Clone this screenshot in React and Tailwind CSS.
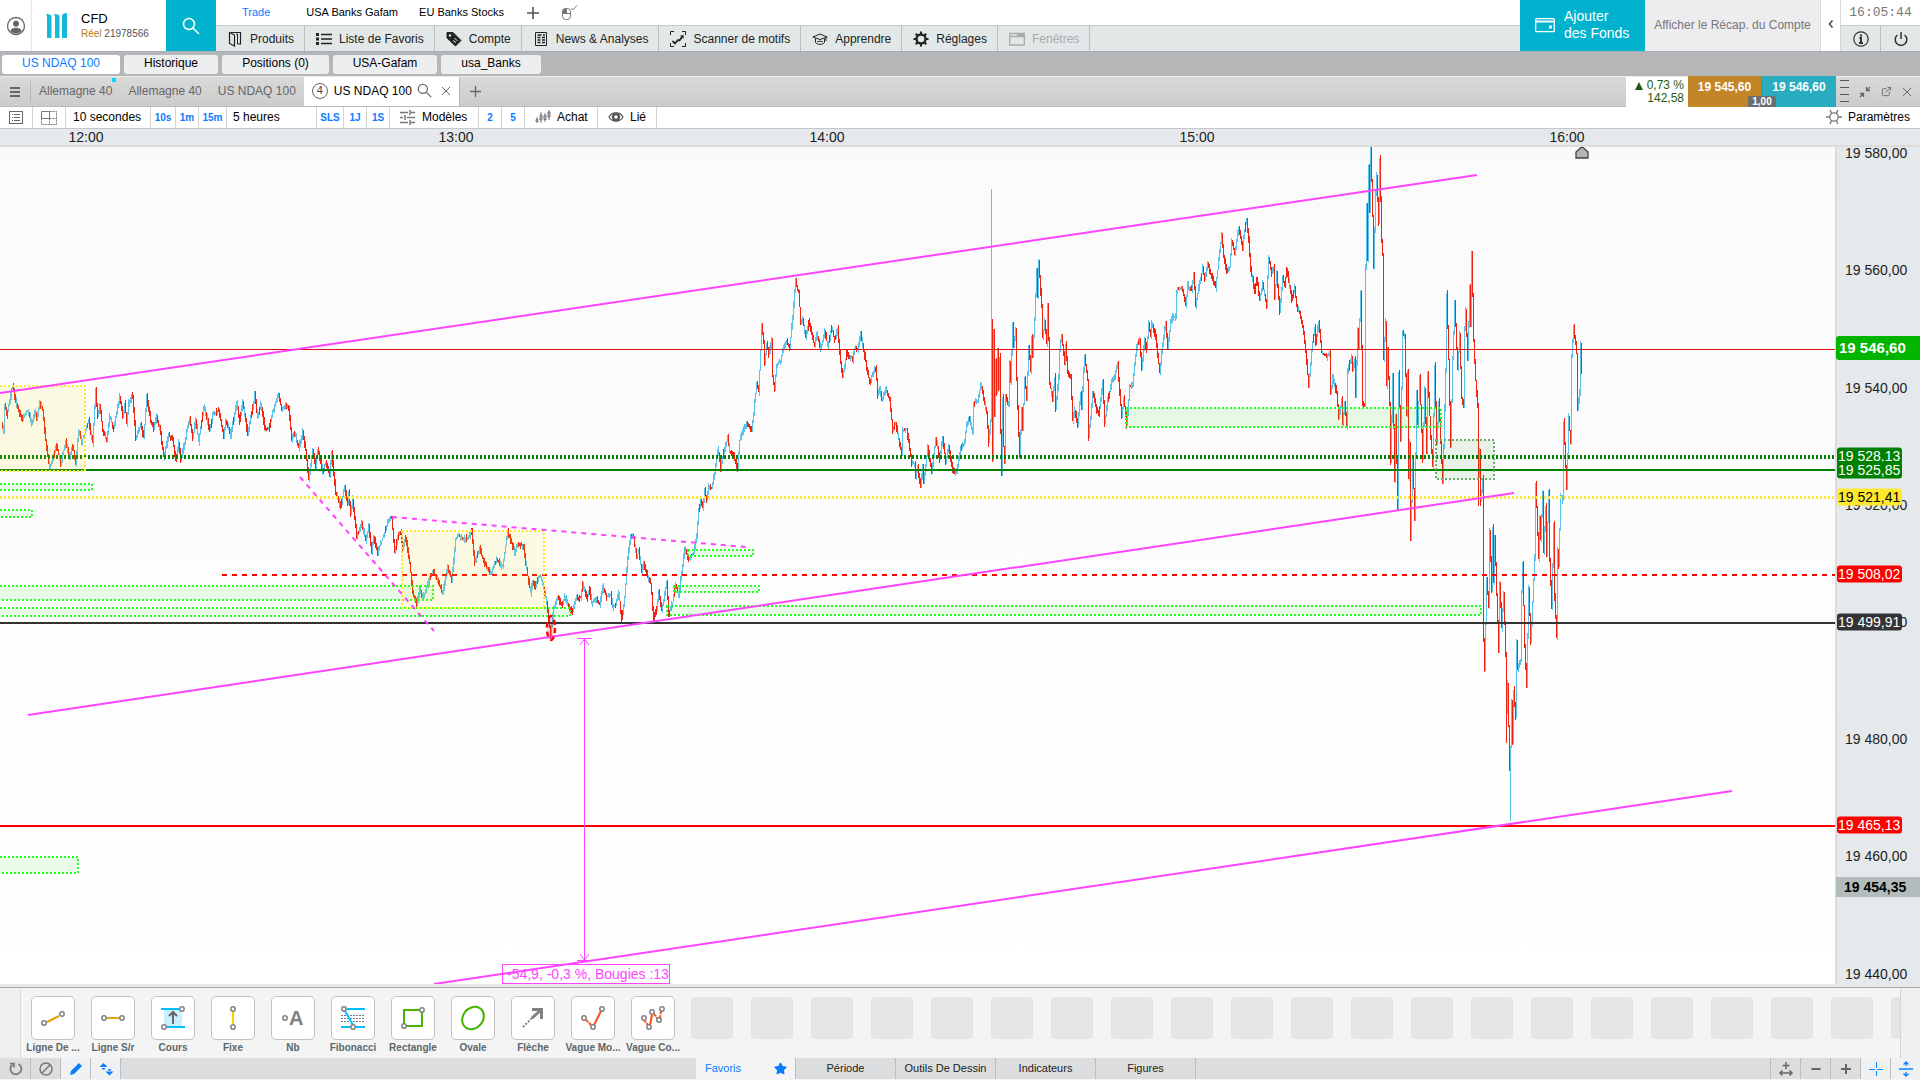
import { FiExternalLink } from "react-icons/fi";
import { FaStar } from "react-icons/fa";

const VIEW = { width: 1835, top: 147, height: 837 };
const PINK = "#ff44ff";

// swing points of the session, [x, y]; a third value reopens the next leg at another y
const SWINGS = [
  [2, 422], [4, 433], [5, 405], [7, 415], [13, 387], [17, 405], [22, 419], [28, 410], [32, 424], [35, 411], [37, 420],
  [40, 403], [43, 410], [46, 440], [50, 469], [53, 458], [57, 445], [61, 465], [66, 440], [70, 458], [73, 445], [76, 463],
  [79, 430], [82, 442], [85, 433], [89, 421], [93, 443], [96, 391], [98, 416], [100, 405], [103, 430], [107, 441],
  [110, 417], [114, 428], [120, 397], [123, 417], [125, 403], [127, 423], [129, 403], [133, 395], [136, 438], [141, 425],
  [144, 438], [147, 397], [151, 420], [154, 428], [157, 417], [161, 433], [164, 457], [169, 435], [173, 440], [176, 460],
  [179, 443], [181, 460], [186, 437], [190, 418], [193, 438], [196, 420], [199, 442], [204, 407], [206, 413], [210, 430],
  [213, 415], [219, 410], [224, 437], [226, 420], [231, 435], [237, 402], [240, 422], [243, 401], [248, 435], [255, 395],
  [258, 418], [261, 403], [265, 427], [269, 430], [273, 412], [279, 394], [282, 410], [286, 405], [289, 407], [292, 440],
  [295, 433], [299, 448], [303, 432], [306, 450], [309, 480], [313, 450], [316, 468], [318, 450], [323, 472], [326, 463],
  [330, 475], [332, 453], [336, 493], [341, 507], [345, 487], [348, 503], [349, 492], [351, 515], [353, 498], [357, 538],
  [362, 523], [366, 540], [369, 527], [372, 552], [374, 537], [378, 552], [383, 538], [388, 523], [392, 517], [395, 552],
  [398, 537], [401, 532], [403, 548], [406, 537], [410, 563], [413, 593], [417, 605], [420, 588], [423, 598], [429, 582],
  [433, 570], [437, 578], [443, 593], [448, 567], [452, 580], [456, 540], [459, 535], [463, 540], [469, 537], [472, 531],
  [475, 563], [480, 548], [484, 562], [491, 574], [497, 560], [503, 567], [508, 532], [515, 553], [518, 543], [524, 547],
  [527, 570], [531, 593], [533, 580], [535, 587], [540, 575], [543, 582], [547, 603], [551, 635], [554, 608], [558, 598],
  [562, 605], [565, 597], [572, 612], [577, 597], [581, 598], [583, 583], [587, 598], [590, 590], [592, 603], [597, 600],
  [600, 605], [603, 587], [607, 597], [611, 595], [613, 607], [616, 605], [619, 592], [622, 619], [625, 597], [628, 557],
  [631, 537], [634, 538], [637, 558], [639, 550], [642, 572], [644, 563], [648, 577], [651, 583], [654, 620], [657, 608],
  [659, 593], [662, 610], [667, 583], [669, 613], [673, 602], [676, 585], [679, 595], [682, 573], [685, 548], [689, 560],
  [694, 553], [697, 537], [699, 510], [701, 500], [703, 508], [705, 491], [707, 500], [709, 487], [712, 488], [715, 473],
  [718, 449], [721, 468], [724, 452], [728, 437], [730, 452], [733, 453], [738, 468], [740, 440], [743, 432], [747, 423],
  [752, 430], [754, 413], [757, 383], [759, 392], [761, 350], [762, 327], [764, 340], [765, 365], [767, 343], [769, 355],
  [772, 340], [773, 377], [775, 388], [777, 365], [781, 360], [783, 350], [787, 340], [790, 348], [793, 317], [796, 281],
  [798, 290], [799, 292], [801, 322], [803, 320], [806, 337], [809, 322], [813, 337], [815, 347], [817, 333], [821, 350],
  [825, 330], [828, 347], [832, 328], [835, 340], [838, 328], [840, 353], [843, 378], [847, 353], [853, 360], [855, 347],
  [858, 350], [861, 333], [863, 345], [867, 367], [870, 382], [876, 367], [878, 395], [880, 387], [882, 400], [886, 388],
  [890, 400], [893, 430], [896, 423], [902, 453], [903, 430], [907, 430], [909, 443], [912, 463], [915, 463], [916, 478],
  [918, 468], [921, 487], [923, 467], [924, 482], [928, 447], [932, 473], [936, 438], [940, 460], [943, 438], [946, 462],
  [949, 447], [953, 470], [957, 473], [959, 457], [962, 445], [965, 443], [967, 423], [970, 418], [973, 432], [974, 403],
  [978, 400], [981, 385], [985, 403], [987, 412], [989, 443], [991, 420], [992, 190, 323], [993, 460], [994, 330], [995, 417],
  [996, 360], [997, 393], [998, 350], [999, 387], [1000, 357], [1001, 430], [1002, 472], [1003, 397], [1004, 447],
  [1005, 463], [1006, 395], [1009, 405], [1010, 362], [1011, 382], [1013, 323], [1014, 345], [1016, 329], [1017, 380],
  [1019, 433], [1020, 455], [1022, 410], [1023, 428], [1025, 378], [1027, 398], [1029, 347], [1031, 370], [1032, 337],
  [1033, 355], [1035, 320], [1037, 270], [1038, 298], [1039, 262], [1042, 307], [1043, 338], [1045, 320], [1047, 343],
  [1048, 305], [1049, 340], [1050, 383], [1053, 400], [1055, 377], [1056, 408], [1059, 377], [1060, 350], [1062, 335],
  [1065, 363], [1066, 345], [1068, 373], [1071, 377], [1073, 420], [1075, 410], [1078, 425], [1081, 393], [1082, 410],
  [1084, 370], [1085, 357], [1088, 380], [1089, 438], [1092, 407], [1093, 392], [1097, 410], [1099, 415], [1103, 383],
  [1105, 423], [1108, 400], [1112, 383], [1115, 377], [1118, 363], [1120, 393], [1122, 417], [1124, 397], [1127, 425],
  [1130, 387], [1133, 383], [1135, 363], [1137, 347], [1140, 340], [1142, 367], [1145, 340], [1147, 350], [1149, 323],
  [1151, 337], [1152, 322], [1156, 337], [1160, 372], [1163, 343], [1166, 323], [1168, 347], [1171, 323], [1173, 317],
  [1176, 317], [1177, 290], [1182, 287], [1186, 305], [1188, 285], [1192, 290], [1194, 273], [1196, 305], [1199, 288],
  [1203, 268], [1205, 280], [1208, 263], [1212, 277], [1216, 288], [1218, 270], [1222, 233], [1224, 257], [1227, 272],
  [1230, 267], [1232, 242], [1235, 253], [1239, 227], [1243, 247], [1245, 230], [1247, 219], [1249, 240], [1251, 268],
  [1255, 292], [1257, 278], [1260, 300], [1263, 283], [1267, 307], [1268, 277], [1269, 258], [1272, 273], [1274, 268],
  [1275, 297], [1277, 273], [1280, 312], [1283, 277], [1285, 287], [1287, 268], [1292, 300], [1295, 287], [1297, 307],
  [1300, 313], [1303, 327], [1306, 350], [1309, 387], [1312, 350], [1315, 327], [1316, 342], [1319, 322], [1322, 352],
  [1327, 357], [1330, 353], [1331, 393], [1333, 377], [1337, 393], [1339, 417], [1342, 400], [1343, 423], [1345, 402],
  [1347, 426], [1348, 370], [1352, 358], [1353, 370], [1355, 358], [1356, 397], [1358, 330], [1359, 347], [1361, 292],
  [1363, 403], [1365, 405], [1366, 267], [1367, 203], [1368, 260], [1369, 167], [1370, 212], [1371, 147], [1373, 217],
  [1374, 265], [1376, 193], [1377, 175], [1379, 223], [1380, 159], [1382, 240], [1383, 255], [1384, 358], [1386, 322],
  [1387, 385], [1388, 350], [1390, 403], [1391, 463], [1393, 375], [1395, 480], [1396, 417], [1398, 507], [1399, 373],
  [1401, 440], [1403, 333], [1405, 337], [1407, 413], [1408, 370], [1409, 478], [1410, 443], [1411, 540], [1413, 460],
  [1415, 518], [1417, 393], [1418, 425], [1420, 377], [1423, 460], [1425, 388], [1427, 453], [1428, 373], [1431, 437],
  [1433, 467], [1435, 365], [1437, 443], [1439, 402], [1442, 460], [1443, 483], [1446, 370], [1447, 293], [1449, 360],
  [1451, 445], [1453, 360], [1455, 303], [1458, 370], [1460, 335], [1462, 397], [1464, 405], [1465, 330], [1466, 310],
  [1468, 360], [1470, 288], [1471, 325], [1472, 253], [1474, 340], [1476, 380], [1478, 407], [1478, 503], [1480, 450],
  [1481, 502], [1483, 478], [1483, 610], [1485, 668], [1487, 580], [1489, 607], [1490, 530], [1492, 590], [1493, 527],
  [1494, 582], [1495, 537], [1497, 593], [1499, 650], [1500, 583], [1502, 628], [1504, 593], [1506, 653], [1506, 742],
  [1508, 683], [1510, 770, 817], [1511, 747], [1512, 700], [1513, 743], [1514, 690], [1516, 717], [1517, 640], [1518, 670],
  [1521, 660], [1522, 590], [1523, 563], [1525, 647], [1527, 685], [1529, 587], [1531, 642], [1533, 603], [1535, 557],
  [1536, 483], [1539, 558], [1540, 517], [1541, 540], [1543, 492], [1544, 552], [1546, 507], [1547, 555], [1549, 490],
  [1550, 560], [1552, 608], [1554, 523], [1555, 597], [1557, 637], [1558, 550], [1559, 567], [1561, 495], [1563, 500],
  [1564, 422], [1567, 490], [1569, 417], [1571, 443], [1572, 357], [1574, 327], [1577, 353], [1578, 408], [1580, 393],
  [1581, 345], [1582, 370],
];

function noise(n) {
  const v = Math.sin(n * 12.9898) * 43758.5453;
  return v - Math.floor(v);
}

function buildCandles() {
  let up = "";
  let down = "";
  let seed = 1;
  for (let i = 0; i < SWINGS.length - 1; i++) {
    const [x0, close, open] = SWINGS[i];
    const [x1, y1] = SWINGS[i + 1];
    const y0 = open ?? close;
    const steps = Math.max(1, x1 - x0);
    for (let k = 0; k < steps; k++) {
      seed++;
      const a = y0 + ((y1 - y0) * k) / steps;
      const b = y0 + ((y1 - y0) * (k + 1)) / steps;
      const lo = Math.round(Math.min(a, b) - noise(seed) * 4);
      const hi = Math.round(Math.max(a, b) + noise(seed + 0.5) * 4);
      const flip = hi - lo < 12 && noise(seed + 0.25) > 0.8;
      const bar = `M${x0 + k + 0.5} ${lo}V${hi}`;
      if (y1 > y0 !== flip) down += bar;
      else up += bar;
    }
  }
  return { up, down };
}

const CANDLES = buildCandles();

const ZONES = [
  { x: -4, y: 484, w: 96, h: 6 },
  { x: -4, y: 510, w: 36, h: 7 },
  { x: -4, y: 586, w: 437, h: 14 },
  { x: -4, y: 608, w: 574, h: 8 },
  { x: 688, y: 550, w: 65, h: 6 },
  { x: 674, y: 586, w: 85, h: 6 },
  { x: 667, y: 606, w: 814, h: 9 },
  { x: 1126, y: 408, w: 315, h: 19 },
  { x: -4, y: 857, w: 82, h: 16 },
];

const HOURS = [
  { label: "12:00", x: 86 },
  { label: "13:00", x: 456 },
  { label: "14:00", x: 827 },
  { label: "15:00", x: 1197 },
  { label: "16:00", x: 1567 },
];

const PRICES = [
  { label: "19 580,00", y: 153 },
  { label: "19 560,00", y: 270 },
  { label: "19 540,00", y: 388 },
  { label: "19 520,00", y: 505 },
  { label: "19 500,00", y: 622 },
  { label: "19 480,00", y: 739 },
  { label: "19 460,00", y: 856 },
  { label: "19 440,00", y: 974 },
];

const LEVELS = [
  { label: "19 528,13", y: 456, color: "bg-[#008000] text-white" },
  { label: "19 525,85", y: 470, color: "bg-[#008000] text-white" },
  { label: "19 521,41", y: 497, color: "bg-[#ffe92e] text-black" },
  { label: "19 508,02", y: 574, color: "bg-[#ff0000] text-white" },
  { label: "19 499,91", y: 622, color: "bg-[#333333] text-white" },
  { label: "19 465,13", y: 825, color: "bg-[#ff0000] text-white" },
];

const pctX = (x) => `${(x / VIEW.width) * 100}%`;
const pctY = (y) => `${((y - VIEW.top) / VIEW.height) * 100}%`;

function Svg({ size = 16, children, className }) {
  return (
    <svg width={size} height={size} viewBox={`0 0 ${size} ${size}`} fill="none" stroke="currentColor" className={className} aria-hidden="true">
      {children}
    </svg>
  );
}

function SearchIcon({ size }) {
  return (
    <svg width={size} height={size} viewBox="0 0 18 18" fill="none" stroke="currentColor" strokeWidth="1.5" aria-hidden="true">
      <circle cx="7" cy="7" r="5.5" />
      <path d="M11 11L17 17" />
    </svg>
  );
}

const MENU = [
  {
    label: "Produits",
    icon: (
      <Svg>
        <path d="M4 1.500h9.500V13h-3M2.500 1.500l5 2.500v11l-5-2.500z" strokeWidth="1.200" />
        <path d="M9 3h1.500v10" />
      </Svg>
    ),
  },
  {
    label: "Liste de Favoris",
    icon: (
      <Svg>
        <path d="M5 3.5h11M5 8h11M5 12.5h11" strokeWidth="1.4" />
        <path d="M0 3.5h3M0 8h3M0 12.5h3" strokeWidth="3" />
      </Svg>
    ),
  },
  {
    label: "Compte",
    icon: (
      <Svg>
        <path d="M1 1.5h6l8 8-5.5 5.5-8.5-8z" fill="currentColor" />
        <circle cx="4" cy="4.5" r="1.2" fill="#e2e8e8" stroke="none" />
        <path d="M7 9.5l3 2M8.5 7l3 3" stroke="#e2e8e8" />
      </Svg>
    ),
  },
  {
    label: "News & Analyses",
    icon: (
      <Svg>
        <path d="M2.5 1.5h11v13h-11z" />
        <path d="M4.5 4h4M10 4h2M4.5 6.5h3M9 6.5h3M4.5 9h3M9 9h3M4.5 11.5h3M9 11.5h3" strokeWidth="1.5" />
      </Svg>
    ),
  },
  {
    label: "Scanner de motifs",
    icon: (
      <Svg>
        <path d="M.5 4V.5H4M12 .5h3.5V4M.5 12v3.5H4M12 15.5h3.5V12" />
        <path d="M2.500 10l2.500 2.500 3-3.500 1.500.5L13 4.500" strokeWidth="1.8" />
        <path d="M10 4.500h3.500V8z" fill="currentColor" stroke="none" />
      </Svg>
    ),
  },
  {
    label: "Apprendre",
    icon: (
      <Svg>
        <path d="M.8 6L8 3l7.200 3L8 8.500z M3.500 7.500v4c2 2.500 7 2.500 9 0v-4M14 7v3M5 11c1.500-1 4.500-1 6 0" />
      </Svg>
    ),
  },
  {
    label: "Réglages",
    icon: (
      <Svg>
        <circle cx="8" cy="8" r="4.500" strokeWidth="2.400" />
        <path d="M8 .5v3M8 12.500v3M.5 8h3M12.500 8h3M2.700 2.700l2 2M11.300 11.300l2 2M13.300 2.700l-2 2M4.700 11.300l-2 2" strokeWidth="2" />
      </Svg>
    ),
  },
  {
    label: "Fenêtres",
    disabled: true,
    icon: (
      <Svg>
        <path d="M.7 2.500h14.600v11.500H.7z M.7 5.500h14.600" strokeWidth="1.300" />
        <path d="M8 4h7" strokeWidth="2.500" />
      </Svg>
    ),
  },
];

function Header() {
  return (
    <header className="flex h-[52px] shrink-0 border-b border-[#a5adbd] bg-white">
      <button className="flex w-8 items-center justify-center border-r border-gray-200 text-[#666]" aria-label="Profil">
        <Svg size={20}>
          <circle cx="10" cy="10" r="8.500" strokeWidth="1.300" />
          <circle cx="10" cy="7.800" r="3" fill="currentColor" stroke="none" />
          <path d="M4.200 15c1-4.500 10.600-4.500 11.600 0-3 3.200-8.600 3.200-11.600 0z" fill="currentColor" stroke="none" />
        </Svg>
      </button>
      <div className="flex w-[134px] items-center gap-3 pl-[13px]">
        <svg width="24" height="26" viewBox="0 0 24 26" fill="#16b9dc" aria-hidden="true">
          <path d="M1 1c4 0 5.500 1 5.500 3v21H2V4q0-2-1-3z M9 1c4 0 5.500 1 5.500 3v21H10V4q0-2-1-3z M22 0c-3.500 0-5 1.500-5 4v21h5z" />
        </svg>
        <div className="flex flex-col">
          <span className="text-[13px] leading-4">CFD</span>
          <span className="text-[10px] leading-[14px] whitespace-nowrap text-[#555]">
            <span className="text-[#b87a10]">Réel</span> 21978566
          </span>
        </div>
      </div>
      <button className="flex w-[50px] items-center justify-center bg-[#00b2ce] text-white" aria-label="Rechercher">
        <SearchIcon size={18} />
      </button>
      <div className="flex min-w-0 flex-1 flex-col">
        <nav className="flex h-[26px] items-center border-b border-[#c5cacb] pl-[26px] text-[11px]">
          <button className="mr-9 text-[#0a7cff]">Trade</button>
          <button className="mr-[21px]">USA Banks Gafam</button>
          <button className="mr-[22px]">EU Banks Stocks</button>
          <button className="mr-5 text-[#555]" aria-label="Ajouter un espace">
            <Svg size={14}>
              <path d="M7 1v12M1 7h12" strokeWidth="1.600" />
            </Svg>
          </button>
          <button className="text-[#777]" aria-label="Options souris">
            <Svg size={18}>
              <rect x="2.500" y="4.500" width="8" height="11" rx="3" />
              <path d="M2.500 9.500h8M6.500 4.500v5" />
              <path d="M3 9V7q0-2 3-2v4z" fill="currentColor" />
              <path d="M11.500 4l1.500 1.800L17 1.500" />
            </Svg>
          </button>
        </nav>
        <nav className="flex flex-1 bg-[#e2e8e8] text-xs text-[#222]">
          {MENU.map((m) => (
            <button
              key={m.label}
              disabled={m.disabled}
              className={`flex items-center gap-[7px] border-r border-[#b9bebe] pr-[10px] pl-[11px] whitespace-nowrap ${m.disabled ? "text-[#aaa]" : ""}`}
            >
              {m.icon}
              {m.label}
            </button>
          ))}
        </nav>
      </div>
      <button className="flex w-[125px] items-center gap-[9px] bg-[#00b2ce] pb-0.5 pl-[15px] text-left text-sm leading-[17px] text-white">
        <svg width="20" height="16" viewBox="0 0 20 16" fill="none" stroke="currentColor" aria-hidden="true">
          <rect x=".7" y="1.700" width="18.600" height="13" rx="1" strokeWidth="1.300" />
          <path d="M1 4.500h18" strokeWidth="2" />
          <path d="M14 10h3" strokeWidth="3" />
        </svg>
        <span>
          Ajouter
          <br />
          des Fonds
        </span>
      </button>
      <button className="w-44 border-r border-[#d5d8da] bg-[#ededf0] pb-0.5 text-xs text-[#777]">Afficher le Récap. du Compte</button>
      <button className="flex w-5 items-center justify-center border-r border-[#d5d8da] pb-1 text-[#555]" aria-label="Réduire">
        <Svg size={10}>
          <path d="M6.500 1.500L3.500 5l3 3.500" strokeWidth="1.700" />
        </Svg>
      </button>
      <div className="flex w-[79px] flex-col">
        <time className="flex h-[26px] items-center justify-center border-b border-[#c5cacb] font-['Liberation_Mono',monospace] text-[13px] text-[#777]">16:05:44</time>
        <div className="flex flex-1 bg-[#e2e8e8] text-[#333]">
          <button className="flex flex-1 items-center justify-center border-r border-[#b9bebe]" aria-label="Informations">
            <Svg>
              <circle cx="8" cy="8" r="7.200" strokeWidth="1.200" />
              <path d="M8 3.500v2M6.500 7H8v5M6 12h4" strokeWidth="2" />
            </Svg>
          </button>
          <button className="flex flex-1 items-center justify-center" aria-label="Déconnexion">
            <Svg>
              <path d="M8 1v7M4.500 4a5.800 5.800 0 1 0 7 0" strokeWidth="1.500" />
            </Svg>
          </button>
        </div>
      </div>
    </header>
  );
}

function WorkspaceTabs() {
  return (
    <nav className="flex h-6 shrink-0 items-center gap-1 bg-[#b5b6b8] pl-0.5 text-xs *:h-[19px] *:rounded-[3px] *:bg-[#edeef0] *:pb-0.5">
      <button className="w-[118px] !bg-white text-[#0a7cff]">US NDAQ 100</button>
      <button className="w-[94px]">Historique</button>
      <button className="w-[107px]">Positions (0)</button>
      <button className="w-[104px]">USA-Gafam</button>
      <button className="w-[100px]">usa_Banks</button>
    </nav>
  );
}

function ChartTabs() {
  return (
    <div className="flex h-[31px] shrink-0 border-t border-b border-t-[#ececec] border-b-[#b9bbbc] bg-linear-to-b from-[#d9d9d9] to-[#cccccc] text-xs text-[#666]">
      <button className="my-1 flex w-[31px] items-center justify-center border-r border-[#b8b8b8]" aria-label="Menu">
        <Svg size={12}>
          <path d="M1 2h10M1 6h10M1 10h10" strokeWidth="2" />
        </Svg>
      </button>
      <button className="relative px-2 pb-0.5">
        Allemagne 40
        <span className="absolute top-px right-1 size-1 bg-[#00d8f5]" />
      </button>
      <button className="px-2 pb-0.5">Allemagne 40</button>
      <button className="px-2 pb-0.5">US NDAQ 100</button>
      <div className="flex w-[156px] items-center gap-[5px] border-r border-[#b8b8b8] bg-white pb-0.5 pl-2">
        <span className="flex size-4 items-center justify-center rounded-full border border-[#666] text-[11px] text-[#444]">4</span>
        <span className="pl-px text-black">US NDAQ 100</span>
        <button aria-label="Rechercher">
          <SearchIcon size={15} />
        </button>
        <button className="ml-1" aria-label="Fermer l'onglet">
          <Svg size={10}>
            <path d="M1 1l8 8M9 1L1 9" />
          </Svg>
        </button>
      </div>
      <button className="px-2.5" aria-label="Nouvel onglet">
        <Svg size={11}>
          <path d="M5.500 0v11M0 5.500h11" strokeWidth="1.300" />
        </Svg>
      </button>
      <div className="-mb-px ml-auto flex w-[62px] flex-col items-end bg-white pt-0.5 pr-1 leading-[13px] text-[#1d5c0f]">
        <span className="flex items-center gap-1">
          <Svg size={8}>
            <path d="M4 0l4 8H0z" fill="currentColor" stroke="none" />
          </Svg>
          0,73 %
        </span>
        <span>142,58</span>
      </div>
      <div className="relative -mt-px -mb-px flex font-bold text-white *:w-[74px]">
        <button className="border-r border-[#8d7a4c] bg-[#c28628] pb-2.5">19 545,60</button>
        <button className="bg-[#2aacc0] pb-2.5">19 546,60</button>
        <span className="absolute bottom-0 left-1/2 flex h-[11px] !w-7 -translate-x-1/2 items-center justify-center rounded-t-[2px] bg-[#6b6f73] text-[10px]">1,00</span>
      </div>
      <div className="flex w-[84px] items-center justify-between pr-2 pl-1">
        <svg width="9" height="26" viewBox="0 0 9 26" stroke="#555" aria-hidden="true">
          <path d="M0 1.500h9M0 8.500h9M0 15.500h9M0 22.500h9" />
        </svg>
        <button aria-label="Réduire">
          <Svg size={12}>
            <path d="M11 1L8 4M7.500 1v3.500H11M1 11l3-3M1 7.500h3.500V11" strokeWidth="1.300" />
          </Svg>
        </button>
        <button aria-label="Détacher">
          <FiExternalLink size={11} />
        </button>
        <button aria-label="Fermer">
          <Svg size={10}>
            <path d="M1 1l8 8M9 1L1 9" />
          </Svg>
        </button>
      </div>
    </div>
  );
}

function Toolbar() {
  return (
    <div className="flex h-[22px] shrink-0 items-stretch border-b border-[#c3c7c9] bg-white text-xs">
      <button className="flex w-[33px] items-center justify-center border-r border-[#d5d5d5] text-[#666]" aria-label="Liste">
        <Svg>
          <rect x="1.500" y="1.500" width="13" height="12" />
          <path d="M4 4.500h1M6 4.500h6M4 7.500h1M6 7.500h6M4 10.500h1M6 10.500h6" />
        </Svg>
      </button>
      <button className="flex w-[33px] items-center justify-center border-r border-[#d5d5d5] text-[#777]" aria-label="Disposition">
        <Svg>
          <path d="M.5 1.500h8v7h-8z" />
          <path d="M8.500 1.500h7v13h-15v-6M8.500 8.500v6M8.500 8.500h7" strokeDasharray="2 1" />
        </Svg>
      </button>
      <button className="w-[85px] border-r border-[#d5d5d5] pb-0.5 pl-[7px] text-left">10 secondes</button>
      <div className="flex text-[10px] font-bold text-[#0a7cff] *:border-r *:border-[#d5d5d5]">
        <button className="w-[25px]">10s</button>
        <button className="w-[23px]">1m</button>
        <button className="w-7">15m</button>
      </div>
      <button className="w-[90px] border-r border-[#d5d5d5] pb-0.5 pl-[6px] text-left">5 heures</button>
      <div className="flex text-[10px] font-bold text-[#0a7cff] *:border-r *:border-[#d5d5d5]">
        <button className="w-[27px]">SLS</button>
        <button className="w-[23px]">1J</button>
        <button className="w-[23px]">1S</button>
      </div>
      <button className="flex w-[89px] items-center gap-[6px] border-r border-[#d5d5d5] pb-0.5 pl-[10px]">
        <Svg className="text-[#777]">
          <path d="M0 3.500h8M11 3.500h4M0 8.500h3M7 8.500h8M0 13.500h8M11 13.500h4" strokeWidth="1.500" />
          <path d="M10 1v5M5 6v5M10 11v5" strokeWidth="1.500" />
        </Svg>
        Modèles
      </button>
      <div className="flex text-[10px] font-bold text-[#0a7cff] *:border-r *:border-[#d5d5d5]">
        <button className="w-[23px]">2</button>
        <button className="w-[23px]">5</button>
      </div>
      <button className="flex w-[73px] items-center gap-[6px] border-r border-[#d5d5d5] pb-0.5 pl-[10px]">
        <Svg className="text-[#777]">
          <path d="M2 8v6M1 10.500h2v2H1zM6 3v11M5 6h2v5H5zM10 4v9M9 6.500h2v4H9zM14 1v10M13 3h2v5h-2z" fill="#fff" />
        </Svg>
        Achat
      </button>
      <button className="flex w-[59px] items-center gap-[6px] border-r border-[#d5d5d5] pb-0.5 pl-[10px]">
        <Svg className="text-[#555]">
          <path d="M1 8c3-5.500 11-5.500 14 0-3 5.500-11 5.500-14 0z" strokeWidth="1.200" />
          <circle cx="8" cy="8" r="3" strokeWidth="2.400" />
        </Svg>
        Lié
      </button>
      <button className="ml-auto flex items-center gap-[6px] pr-2.5 pb-0.5">
        <Svg className="text-[#777]">
          <circle cx="8" cy="8" r="4.200" strokeWidth="1.300" />
          <path d="M4 1l1.500 3M12 1l-1.500 3M0 8h3.500M12.500 8H16M4 15l1.500-3M12 15l-1.500-3" strokeWidth="1.400" />
        </Svg>
        Paramètres
      </button>
    </div>
  );
}

function PlotDrawing() {
  return (
    <svg
      className="absolute inset-0 h-full w-full"
      viewBox={`0 ${VIEW.top} ${VIEW.width} ${VIEW.height}`}
      preserveAspectRatio="none"
      fill="none"
      aria-hidden="true"
    >
      <g strokeWidth="1" shapeRendering="crispEdges">
        <path d={CANDLES.up} stroke="#5bc2ea" />
        <path d={CANDLES.down} stroke="#f02410" />
      </g>
      <g shapeRendering="crispEdges" strokeWidth="2">
        <path d="M0 349.500H1835" stroke="#e01010" strokeWidth="1" />
        <path d="M0 457H1835" stroke="#008000" strokeWidth="4" strokeDasharray="2 2" />
        <path d="M0 470H1835" stroke="#008000" />
        <path d="M0 497.500H1835" stroke="#ffe92e" strokeWidth="3" strokeDasharray="2 2" />
        <path d="M222 575H1835" stroke="#ff0000" strokeDasharray="5 5" />
        <path d="M0 623H1835" stroke="#333333" />
        <path d="M0 826H1835" stroke="#ff0000" />
        {ZONES.map((z) => (
          <rect key={`${z.x}-${z.y}`} x={z.x} y={z.y} width={z.w} height={z.h} stroke="#22ff22" fill="#00e000" fillOpacity="0.09" strokeDasharray="2 2" />
        ))}
        <rect x="-4" y="386" width="89" height="85" stroke="#ffe92e" fill="#ffe92e" fillOpacity="0.12" strokeDasharray="2 2" />
        <rect x="402" y="531" width="142" height="77" stroke="#ffe92e" fill="#ffe92e" fillOpacity="0.12" strokeDasharray="2 2" />
        <rect x="1436" y="440" width="58" height="39" stroke="#6aae6a" fill="#008000" fillOpacity="0.08" strokeDasharray="2 2" />
      </g>
      <g stroke={PINK} strokeWidth="2">
        <path d="M0 393L1477 175M28 715L1514 493M434 984L1732 791" />
        <path d="M300 477L434 631M392 517L746 547" strokeDasharray="5 5" />
        <path d="M577 638.500h15M584.500 639V960M580 645l4.500-6 4.500 6M580 954l4.500 6 4.500-6M577 960.500h15" strokeWidth="1" />
      </g>
      <ellipse cx="551" cy="628" rx="4" ry="12" stroke="#ff0000" strokeWidth="2.500" strokeDasharray="5 4" fill="#ff0000" fillOpacity="0.15" />
      <path d="M1582 146.500l6 5.500v6h-12v-6z" fill="#b5b5b5" stroke="#444" strokeWidth="1.300" />
    </svg>
  );
}

function Chart() {
  return (
    <section className="flex min-h-0 flex-1 flex-col bg-[#e5e9eb]">
      <div className="flex h-[18px] shrink-0 border-b-2 border-[#dcdcdc] text-sm leading-4 text-[#222]">
        <div className="relative flex-1">
          {HOURS.map((h) => (
            <span key={h.label} className="absolute top-0 -translate-x-1/2" style={{ left: pctX(h.x) }}>
              {h.label}
            </span>
          ))}
        </div>
        <div className="w-[85px]" />
      </div>
      <div className="flex min-h-0 flex-1 pb-[3px]">
        <div className="relative min-w-0 flex-1 overflow-hidden bg-linear-to-b from-[#fafafa] to-white">
          <PlotDrawing />
          <div
            className="absolute flex h-5 items-center overflow-hidden border border-[#ff44ff] px-1 text-[14px] whitespace-nowrap text-[#ff44ff]"
            style={{ left: pctX(502), top: pctY(964), width: pctX(168) }}
          >
            -54,9, -0,3 %, Bougies :13
          </div>
        </div>
        <div className="relative w-[85px] border-l-2 border-[#dcdcdc] text-sm text-[#222]">
          {PRICES.map((p) => (
            <span key={p.label} className="absolute left-2 -translate-y-1/2 leading-4" style={{ top: pctY(p.y) }}>
              {p.label}
            </span>
          ))}
          {LEVELS.map((l) => (
            <span
              key={l.label}
              className={`absolute left-0 h-[17px] w-[65px] -translate-y-1/2 rounded-[3px] pl-px leading-[17px] whitespace-nowrap ${l.color}`}
              style={{ top: pctY(l.y) }}
            >
              {l.label}
            </span>
          ))}
          <span className="absolute right-0 -left-px flex h-6 -translate-y-1/2 items-center rounded-l-[3px] bg-[#00b400] pl-[3px] text-[15px] font-bold text-white" style={{ top: pctY(348) }}>
            19 546,60
          </span>
          <span className="absolute right-0 -left-px flex h-5 -translate-y-1/2 items-center bg-[#b2bcbb] pl-2 font-bold text-black" style={{ top: pctY(887) }}>
            19 454,35
          </span>
        </div>
      </div>
    </section>
  );
}

function Dot({ x, y }) {
  return <circle cx={x} cy={y} r="2.200" stroke="#808080" strokeWidth="1.500" fill="#fff" />;
}

const DRAW_TOOLS = [
  { label: "Ligne De ...", icon: <><path d="M9 21L21 15" stroke="#dfa40c" strokeWidth="2" /><Dot x={6} y={22} /><Dot x={24} y={13} /></> },
  { label: "Ligne S/r", icon: <><path d="M9 17h12" stroke="#dfa40c" strokeWidth="2" /><Dot x={6} y={17} /><Dot x={24} y={17} /></> },
  {
    label: "Cours",
    icon: (
      <>
        <path d="M6 9h18v16H6z" fill="#c9f0ff" />
        <path d="M3 8h18M9 26h18" stroke="#00bfff" strokeWidth="2" />
        <path d="M15 23V11M11 15l4-4 4 4" stroke="#666" strokeWidth="2" />
        <Dot x={24} y={8} /><Dot x={6} y={26} />
      </>
    ),
  },
  { label: "Fixe", icon: <><path d="M15 11v12" stroke="#ffd000" strokeWidth="2" /><Dot x={15} y={8} /><Dot x={15} y={26} /></> },
  {
    label: "Nb",
    icon: (
      <>
        <Dot x={7} y={17} />
        <text x="11" y="24" fontSize="20" fontWeight="bold" fill="#808080" fontFamily="Liberation Sans, sans-serif">A</text>
      </>
    ),
  },
  {
    label: "Fibonacci",
    icon: (
      <>
        <path d="M9 8h18M3 26h24" stroke="#00bfff" strokeWidth="2" />
        <path d="M3 14.500h24M3 17.500h24M3 20.500h24" stroke="#777" strokeDasharray="2 1" />
        <path d="M7 10l8 14" stroke="#00bfff" strokeWidth="2" />
        <Dot x={6} y={8} /><Dot x={15} y={26} />
      </>
    ),
  },
  { label: "Rectangle", icon: <><path d="M6 9h18v16H6z" stroke="#46b400" strokeWidth="2" /><Dot x={24} y={9} /><Dot x={6} y={25} /></> },
  { label: "Ovale", icon: <ellipse cx="15" cy="17" rx="10" ry="12" transform="rotate(40 15 17)" stroke="#46b400" strokeWidth="2" /> },
  {
    label: "Flèche",
    icon: (
      <>
        <path d="M5 26l10-10" stroke="#808080" strokeWidth="2" strokeDasharray="2 1.500" />
        <path d="M14 17l9-8M14 8.500h9.500V18" stroke="#808080" strokeWidth="3" />
      </>
    ),
  },
  {
    label: "Vague Mo...",
    icon: (
      <>
        <path d="M8 19l5 5" stroke="#ff4a10" strokeWidth="2" strokeDasharray="3 1" />
        <path d="M16 24l7-14" stroke="#ff4a10" strokeWidth="2" />
        <Dot x={6} y={17} /><Dot x={15} y={26} /><Dot x={24} y={8} />
      </>
    ),
  },
  {
    label: "Vague Co...",
    icon: (
      <>
        <path d="M12 24l2-10" stroke="#ff4a10" strokeWidth="2" />
        <path d="M6 19l4 5M16 13l4 5M22 17l1-7" stroke="#ff4a10" strokeWidth="2" strokeDasharray="3 1" />
        <Dot x={6} y={17} /><Dot x={11} y={26} /><Dot x={14} y={11} /><Dot x={21} y={19} /><Dot x={24} y={8} />
      </>
    ),
  },
];

function DrawingTools() {
  return (
    <section className="flex h-[71px] shrink-0 border-t border-[#a3a8aa] bg-[#f4f4f4]">
      <div className="w-[21px] shrink-0 border-r border-[#dadada] bg-[#efefef]" />
      <div className="flex min-w-0 flex-1 overflow-hidden pt-2 pl-0.5">
        {DRAW_TOOLS.map((t) => (
          <button key={t.label} className="flex w-[60px] shrink-0 flex-col items-center">
            <span className="flex size-11 items-center justify-center rounded-[5px] border border-[#c2c2c2] bg-white">
              <svg width="30" height="34" viewBox="0 0 30 34" fill="none" aria-hidden="true">
                {t.icon}
              </svg>
            </span>
            <span className="pt-0.5 text-[10px] leading-3 font-bold whitespace-nowrap text-[#5a686b]">{t.label}</span>
          </button>
        ))}
        <div className="flex gap-[18px] pt-px pl-2">
          {Array.from({ length: 21 }, (_, i) => (
            <div key={i} className="size-[42px] shrink-0 rounded-[4px] bg-[#e5e5e5]" />
          ))}
        </div>
      </div>
      <div className="w-5 shrink-0 border-l border-[#d5d5d5] bg-[#efefef]" />
    </section>
  );
}

function BottomBar() {
  return (
    <footer className="flex h-[22px] shrink-0 border-b border-[#f4f4f4] bg-[#dcdddf] text-[11px] text-[#222]">
      <div className="flex w-[696px] pl-px text-[#777] *:flex *:w-[30px] *:items-center *:justify-center *:border-r *:border-[#bbbdbf]">
        <button aria-label="Actualiser">
          <Svg>
            <path d="M10.500 3a5.500 5.500 0 1 1-6 .5M2 2.500h4v4" strokeWidth="1.700" />
          </Svg>
        </button>
        <button aria-label="Masquer">
          <Svg>
            <circle cx="8" cy="8" r="6" strokeWidth="1.500" />
            <path d="M4 12l8-8" strokeWidth="1.500" />
          </Svg>
        </button>
        <button className="bg-[#eef0f2] text-[#0a7cff]" aria-label="Crayon">
          <Svg>
            <path d="M2 14l1-4 8-8 3 3-8 8z" fill="currentColor" stroke="none" />
          </Svg>
        </button>
        <button className="bg-[#eef0f2] text-[#0a7cff]" aria-label="Aimant">
          <Svg>
            <path d="M5.500 2l4 4h-8zM3.500 7h4l-1 1.500h-2zM11.500 14.500l-4-4h8zM9.500 9.500h4l-1-1.500h-2z" fill="currentColor" stroke="none" />
          </Svg>
        </button>
      </div>
      <nav className="flex *:w-[100px] *:border-r *:border-[#bbbdbf]">
        <button className="flex items-center justify-between bg-[#f4f4f4] pr-2 pl-[9px] text-[#0a7cff]">
          Favoris
          <FaStar size={13} />
        </button>
        <button>Période</button>
        <button>Outils De Dessin</button>
        <button>Indicateurs</button>
        <button>Figures</button>
      </nav>
      <div className="ml-auto flex text-[#666] *:flex *:w-[30px] *:items-center *:justify-center *:border-l *:border-[#bbbdbf]">
        <button aria-label="Ajuster">
          <Svg>
            <path d="M8 1v7M4.500 4.500h7M3 12h10M4.500 9.500L2 12l2.500 2.500M11.500 9.500L14 12l-2.500 2.500" strokeWidth="1.500" />
          </Svg>
        </button>
        <button aria-label="Zoom arrière">
          <Svg>
            <path d="M3.500 8h9" strokeWidth="2" />
          </Svg>
        </button>
        <button aria-label="Zoom avant">
          <Svg>
            <path d="M3 8h10M8 3v10" strokeWidth="2" />
          </Svg>
        </button>
        <button className="bg-[#eef0f2] text-[#0a84ff]" aria-label="Réticule">
          <Svg>
            <path d="M1 8.500h6M9 8.500h6M8.500 1v6M8.500 10v5" />
          </Svg>
        </button>
        <button className="bg-[#eef0f2] text-[#0a84ff]" aria-label="Échelle verticale">
          <Svg>
            <path d="M1 8h14M8 1v4M8 11v4M5.500 3.500L8 1l2.500 2.500M5.500 12.500L8 15l2.500-2.500" strokeWidth="1.300" />
          </Svg>
        </button>
      </div>
    </footer>
  );
}

export default function App() {
  return (
    <main className="flex h-screen flex-col overflow-hidden bg-[#e5e9eb] font-['Liberation_Sans',Arial,sans-serif] text-black">
      <Header />
      <WorkspaceTabs />
      <ChartTabs />
      <Toolbar />
      <Chart />
      <DrawingTools />
      <BottomBar />
    </main>
  );
}
